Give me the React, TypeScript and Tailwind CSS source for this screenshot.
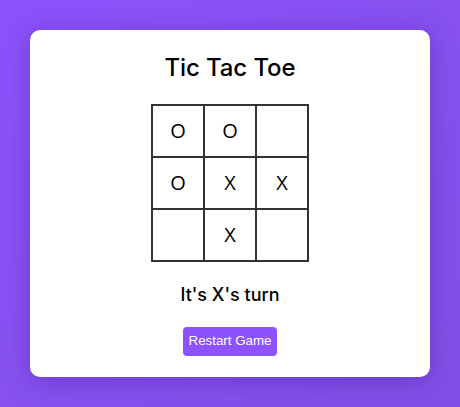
import React from "react";

const board = ["O", "O", "", "O", "X", "X", "", "X", ""];

export default function App() {
  return (
    <div className="w-[460px] h-[407px] flex items-center justify-center pb-[1px] bg-gradient-to-br from-[#8c52fb] to-[#8150e6]">
      <div className="w-[400px] h-[347px] bg-white rounded-[10px] shadow-[0_4px_24px_rgba(60,20,130,0.35)] flex flex-col items-center pt-[20px]" style={{ fontFamily: "Inter, 'Noto Sans', sans-serif" }}>
        <h1 className="text-[24px] leading-[36px] font-medium text-black tracking-[-0.1px]">Tic Tac Toe</h1>
        <div className="mt-[18px] grid grid-cols-[repeat(3,50px)] gap-[2px] p-[2px] bg-[#333333]">
          {board.map((v, i) => (
            <div key={i} className="w-[50px] h-[50px] bg-white flex items-center justify-center text-[20px] text-black font-normal" style={{ fontFamily: "'Open Sans', sans-serif" }}>
              {v}
            </div>
          ))}
        </div>
        <p className="mt-[19px] text-[18px] leading-[27px] font-medium text-black">It's X's turn</p>
        <button className="mt-[19px] h-[29px] px-[6px] rounded-[4px] bg-[#8c52ff] text-white text-[13.33px]" style={{ fontFamily: "'Liberation Sans', Arial, sans-serif" }}>
          Restart Game
        </button>
      </div>
    </div>
  );
}
